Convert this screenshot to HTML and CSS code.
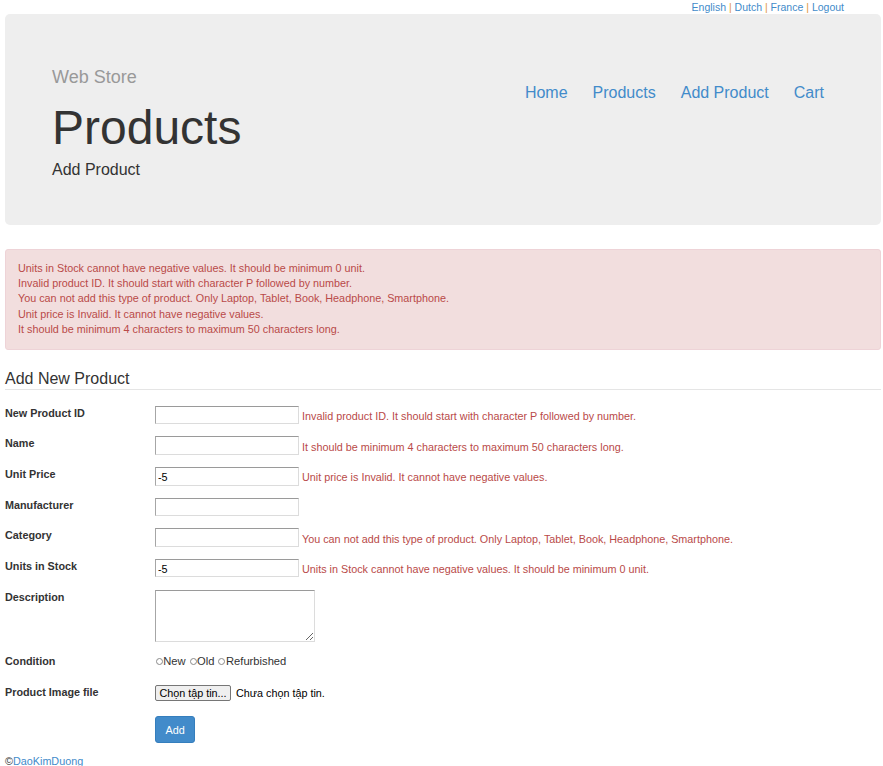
FILE: index.html
```html
<!DOCTYPE html>
<html lang="en">
<head>
<meta charset="utf-8">
<title>Add Product</title>
<link rel="stylesheet" href="styles.css">
</head>
<body>
<div class="page">
  <div class="topbar">
    <a href="#">English</a> <span class="sep">|</span> <a href="#">Dutch</a> <span class="sep">|</span> <a href="#">France</a> <span class="sep">|</span> <a href="#">Logout</a>
  </div>

  <header class="jumbotron">
    <div class="brand">
      <div class="site">Web Store</div>
      <h1 class="title">Products</h1>
      <p class="subtitle">Add Product</p>
    </div>
    <nav class="mainnav">
      <a href="#">Home</a>
      <a href="#">Products</a>
      <a href="#">Add Product</a>
      <a href="#">Cart</a>
    </nav>
  </header>

  <div class="alert">
    <div>Units in Stock cannot have negative values. It should be minimum 0 unit.</div>
    <div>Invalid product ID. It should start with character P followed by number.</div>
    <div>You can not add this type of product. Only Laptop, Tablet, Book, Headphone, Smartphone.</div>
    <div>Unit price is Invalid. It cannot have negative values.</div>
    <div>It should be minimum 4 characters to maximum 50 characters long.</div>
  </div>

  <form class="form">
    <div class="legend">Add New Product</div>

    <div class="row first">
      <label class="lbl">New Product ID</label>
      <div class="ctrl"><input class="txt" type="text" value=""><span class="err">Invalid product ID. It should start with character P followed by number.</span></div>
    </div>
    <div class="row">
      <label class="lbl">Name</label>
      <div class="ctrl"><input class="txt" type="text" value=""><span class="err">It should be minimum 4 characters to maximum 50 characters long.</span></div>
    </div>
    <div class="row">
      <label class="lbl">Unit Price</label>
      <div class="ctrl"><input class="txt" type="text" value="-5"><span class="err">Unit price is Invalid. It cannot have negative values.</span></div>
    </div>
    <div class="row">
      <label class="lbl">Manufacturer</label>
      <div class="ctrl"><input class="txt" type="text" value=""></div>
    </div>
    <div class="row">
      <label class="lbl">Category</label>
      <div class="ctrl"><input class="txt" type="text" value=""><span class="err">You can not add this type of product. Only Laptop, Tablet, Book, Headphone, Smartphone.</span></div>
    </div>
    <div class="row">
      <label class="lbl">Units in Stock</label>
      <div class="ctrl"><input class="txt" type="text" value="-5"><span class="err">Units in Stock cannot have negative values. It should be minimum 0 unit.</span></div>
    </div>
    <div class="row">
      <label class="lbl">Description</label>
      <div class="ctrl"><textarea class="area"></textarea></div>
    </div>
    <div class="row short">
      <label class="lbl">Condition</label>
      <div class="ctrl radios"><label class="opt"><input class="radio" type="radio" name="c">New</label><label class="opt"><input class="radio" type="radio" name="c">Old</label><label class="opt"><input class="radio" type="radio" name="c">Refurbished</label></div>
    </div>
    <div class="row short">
      <label class="lbl">Product Image file</label>
      <div class="ctrl"><button type="button" class="filebtn">Chọn tập tin...</button><span class="filename">Chưa chọn tập tin.</span></div>
    </div>
    <div class="actions">
      <button type="button" class="btn-add">Add</button>
    </div>
  </form>

  <footer class="footer">©<a href="#">DaoKimDuong</a></footer>
</div>
</body>
</html>
```

FILE: styles.css
```css
html, body {
  margin: 0;
  padding: 0;
  overflow: hidden;
}

body {
  font-family: "Liberation Sans", Arial, Helvetica, sans-serif;
  font-size: 10.8px;
  line-height: 15px;
  color: #333333;
  background: #ffffff;
}

a {
  color: #428bca;
  text-decoration: none;
}

.page {
  padding: 0 2px 0 5px;
}

/* top language bar */
.topbar {
  height: 14px;
  font-size: 10.5px;
  line-height: 14px;
  text-align: right;
  padding-right: 37px;
}

.topbar .sep {
  color: #e0963f;
}

/* jumbotron */
.jumbotron {
  box-sizing: border-box;
  height: 211px;
  padding: 53px 44.5px 0 47px;
  background: #eeeeee;
  border-radius: 5px;
  display: flex;
  justify-content: space-between;
  align-items: flex-start;
}

.site {
  font-size: 18px;
  line-height: 20px;
  color: #999999;
}

.title {
  margin: 13px 0 0;
  font-size: 48px;
  line-height: 56px;
  font-weight: 400;
  color: #333333;
}

.subtitle {
  margin: 4px 0 0;
  font-size: 16px;
  line-height: 20px;
  color: #333333;
}

.mainnav {
  margin-top: 15.5px;
  display: flex;
}

.mainnav a {
  padding: 0 12.5px;
  font-size: 16px;
  line-height: 20px;
  color: #428bca;
}

/* alert */
.alert {
  margin-top: 24px;
  padding: 10.9px 12px 11.8px;
  border: 1px solid #eed3d7;
  border-radius: 3px;
  background: #f2dede;
  color: #b94a48;
  line-height: 15.25px;
}

/* form */
.form {
  margin: 0;
}

.legend {
  margin-top: 18.75px;
  font-size: 16px;
  line-height: 20px;
  color: #333333;
  border-bottom: 1px solid #e5e5e5;
}

.row {
  display: flex;
  align-items: flex-start;
  margin-bottom: 12.17px;
}

.row.first {
  margin-top: 16px;
}

.row.short {
  height: 18.5px;
}

.lbl {
  flex: none;
  width: 150px;
  font-weight: bold;
  line-height: 15px;
}

.ctrl {
  display: flex;
  align-items: baseline;
  white-space: nowrap;
}

.txt {
  box-sizing: border-box;
  width: 144px;
  height: 18.5px;
  margin: 0;
  padding: 2px 2px 0;
  font-family: "Liberation Sans", Arial, sans-serif;
  font-size: 10.8px;
  color: #000000;
  background: #ffffff;
  border: 1px solid;
  border-color: #9a9a9a #dcdcdc #dcdcdc #a6a6a6;
  outline: none;
}

.err {
  margin-left: 3px;
  color: #b94a48;
  line-height: 15px;
}

.area {
  box-sizing: border-box;
  width: 160.3px;
  height: 52.7px;
  margin: 0;
  padding: 2px;
  font-family: "Liberation Sans", Arial, sans-serif;
  font-size: 10.8px;
  border: 1px solid;
  border-color: #9a9a9a #dcdcdc #dcdcdc #a6a6a6;
  background: #ffffff;
  resize: both;
}

.radios {
  display: flex;
  align-items: baseline;
  font-size: 11.2px;
  line-height: 15px;
}

.opt {
  font-weight: normal;
  margin-right: 3.3px;
}

.radio {
  -webkit-appearance: none;
  appearance: none;
  box-sizing: border-box;
  display: inline-block;
  width: 7px;
  height: 7px;
  margin: 0 0.5px 0 0.7px;
  border: 1px solid #8a8a8a;
  border-radius: 50%;
  background: #ffffff;
  vertical-align: baseline;
}

.filebtn {
  box-sizing: border-box;
  width: 76px;
  height: 16px;
  margin: 0;
  padding: 0 2px;
  font-family: "Liberation Sans", Arial, sans-serif;
  font-size: 10.8px;
  line-height: 13px;
  color: #000000;
  background: #efefef;
  border: 1px solid #767676;
  border-radius: 2px;
}

.filename {
  margin-left: 5px;
  color: #000000;
}

.actions {
  padding-left: 150px;
}

.btn-add {
  margin: 0;
  padding: 4.8px 9.6px;
  font-family: "Liberation Sans", Arial, sans-serif;
  font-size: 10.8px;
  line-height: 16px;
  color: #ffffff;
  background: #428bca;
  border: 1px solid #357ebd;
  border-radius: 3px;
}

.footer {
  margin-top: 10.7px;
  line-height: 15px;
}
```
